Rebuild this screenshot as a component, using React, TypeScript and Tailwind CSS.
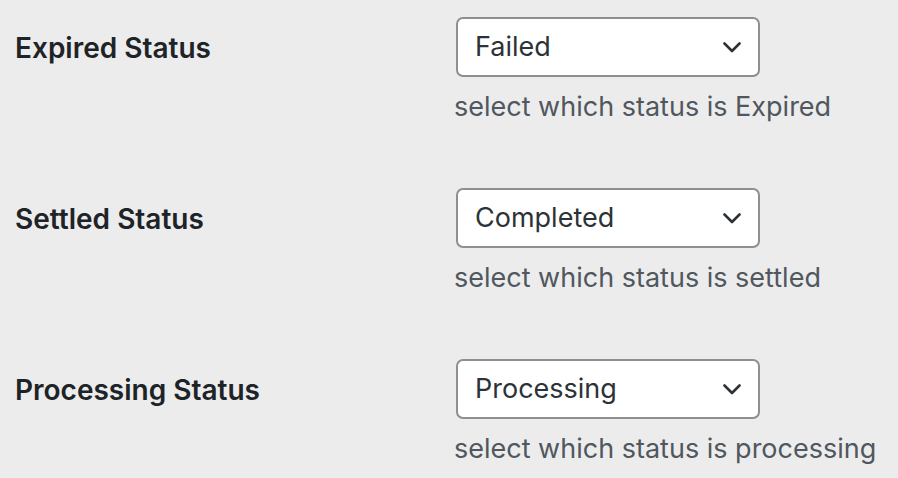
import React from 'react';

const rows = [
  { label: 'Expired Status', value: 'Failed', help: 'select which status is Expired' },
  { label: 'Settled Status', value: 'Completed', help: 'select which status is settled' },
  { label: 'Processing Status', value: 'Processing', help: 'select which status is processing' },
];

const Chevron: React.FC = () => (
  <svg width="18" height="11" viewBox="0 0 18 11" fill="none" className="shrink-0">
    <path d="M1.5 1.5 L9 9 L16.5 1.5" stroke="#2c3338" strokeWidth="2.6" strokeLinecap="round" strokeLinejoin="round" />
  </svg>
);

const App: React.FC = () => {
  return (
    <div
      className="w-[898px] h-[478px] bg-[#ececec] overflow-hidden"
      style={{ fontFamily: 'Inter, "Noto Sans", sans-serif' }}
    >
      <div className="flex flex-col pt-[17px] gap-[63px]">
        {rows.map(row => (
          <div key={row.label} className="flex">
            <div className="w-[456px] pl-[15px] h-[60px] pt-[2px] flex items-center text-[28px] font-semibold text-[#1d2327]">
              {row.label}
            </div>
            <div className="flex flex-col">
              <div className="w-[304px] h-[60px] bg-white border-2 border-[#8c8f94] rounded-[7px] flex items-center justify-between pl-[17px] pr-[17px] text-[27px] text-[#2c3338]">
                <span>{row.value}</span>
                <Chevron />
              </div>
              <div className="mt-[12px] -ml-[2px] text-[27px] leading-[36px] text-[#50575e] whitespace-nowrap">{row.help}</div>
            </div>
          </div>
        ))}
      </div>
    </div>
  );
};

export default App;
